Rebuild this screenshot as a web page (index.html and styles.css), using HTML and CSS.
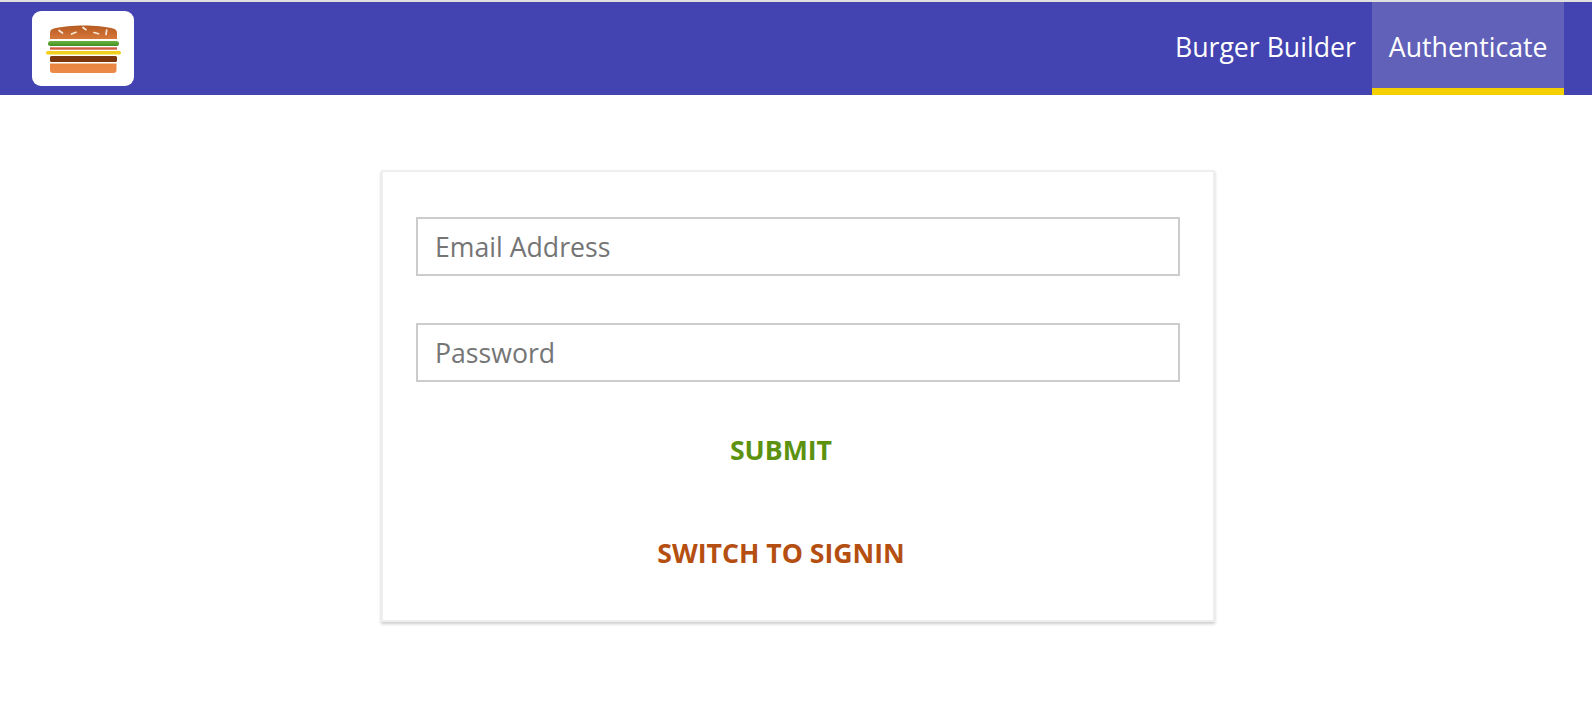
FILE: index.html
```html
<!DOCTYPE html>
<html lang="en">
<head>
<meta charset="utf-8">
<title>Burger Builder</title>
<link rel="stylesheet" href="styles.css">
</head>
<body>
<header class="toolbar">
  <div class="logo">
    <svg class="logo-svg" width="76" height="51" viewBox="45 23 76 51">
      <defs>
        <linearGradient id="bun" x1="0" y1="0" x2="0" y2="1"><stop offset="0" stop-color="#b55a22"/><stop offset="1" stop-color="#d8773a"/></linearGradient>
        <linearGradient id="bun2" x1="0" y1="0" x2="0" y2="1"><stop offset="0" stop-color="#e8853f"/><stop offset="1" stop-color="#ec8a48"/></linearGradient>
        <linearGradient id="leaf" x1="0" y1="0" x2="0" y2="1"><stop offset="0" stop-color="#6eb33f"/><stop offset="1" stop-color="#3f8f25"/></linearGradient>
        <filter id="soft" x="-5%" y="-5%" width="110%" height="110%"><feGaussianBlur stdDeviation="0.35"/></filter>
      </defs>
      <g filter="url(#soft)">
        <path d="M50 39V33C50 30 52 29 54 28.500C70 24.500 98 24.500 113 28.500C115 29 117 30 117 33V39Z" fill="url(#bun)"/>
        <g stroke="#f8e8d8" stroke-width="1.700" stroke-linecap="round">
          <path d="M59 30.500L62.500 33"/><path d="M71.500 34L76 32.300"/><path d="M83 27.500L86 29.700"/><path d="M94 32.500L98.500 33.800"/><path d="M106.700 30L106 34.500"/>
        </g>
        <rect x="48" y="41" width="71" height="5" rx="2.500" fill="url(#leaf)"/>
        <rect x="50" y="47.300" width="67" height="2.400" fill="#cf5f3c"/>
        <rect x="46" y="51" width="75" height="3.400" rx="1.700" fill="#f2cf1a"/>
        <rect x="50" y="56" width="67" height="6" rx="1.500" fill="#7d3408"/>
        <path d="M50 63.500H116.500V70C116.500 72 115.500 73 113.500 73H53C51 73 50 72 50 70Z" fill="url(#bun2)"/>
      </g>
    </svg>
  </div>
  <nav class="nav">
    <a class="nav-item" href="#">Burger Builder</a>
    <a class="nav-item nav-item-active" href="#">Authenticate</a>
  </nav>
</header>
<main class="main">
  <form class="card">
    <input class="field" type="email" placeholder="Email Address">
    <input class="field" type="password" placeholder="Password">
    <div class="actions">
      <button class="btn btn-success" type="button">SUBMIT</button>
      <button class="btn btn-danger" type="button">SWITCH TO SIGNIN</button>
    </div>
  </form>
</main>
</body>
</html>
```
FILE: styles.css
```css
* {
  box-sizing: border-box;
}

html,
body {
  margin: 0;
  padding: 0;
  background: #fff;
}

body {
  font-family: "Open Sans", sans-serif;
  border-top: 2px solid #e0e0e0;
}

.toolbar {
  height: 93px;
  background: #4343b1;
  display: flex;
  align-items: stretch;
  justify-content: space-between;
  padding: 0 28px 0 32px;
}

.logo {
  width: 102px;
  height: 75px;
  margin-top: 9px;
  background: #fff;
  border-radius: 9px;
  display: flex;
  align-items: center;
  justify-content: center;
}

.logo-svg {
  display: block;
  overflow: visible;
}

.nav {
  display: flex;
  align-items: stretch;
}

.nav-item {
  display: flex;
  align-items: center;
  height: 100%;
  padding: 2px 16.5px 0;
  color: #fff;
  font-size: 26.67px;
  text-decoration: none;
  border-bottom: 7px solid transparent;
}

.nav-item-active {
  background: #6161b9;
  border-bottom-color: #f5d000;
}

.main {
  padding: 75px 0 100px 4px;
}

.card {
  width: 834px;
  height: 452px;
  margin: 0 auto;
  padding: 45px 33px 0;
  background: #fff;
  border: 2px solid #eee;
  box-shadow: 0 2px 3px #ccc;
}

.field {
  display: block;
  width: 100%;
  height: 59px;
  margin-bottom: 47px;
  padding: 0 17px;
  border: 2px solid #ccc;
  background: #fff;
  color: #333;
  font: 26.67px "Open Sans", sans-serif;
  outline: none;
}

.field::placeholder {
  color: #757575;
  opacity: 1;
}

.actions {
  display: flex;
  flex-direction: column;
  align-items: center;
  gap: 47px;
  padding-right: 34px;
  margin-top: -7px;
}

.btn {
  border: 0;
  background: none;
  font: 700 26.67px/33px "Open Sans", sans-serif;
  height: 56px;
  padding: 11px 0 12px;
  cursor: pointer;
}

.btn-success {
  color: #5c9210;
}

.btn-danger {
  color: #b54f11;
}
```
